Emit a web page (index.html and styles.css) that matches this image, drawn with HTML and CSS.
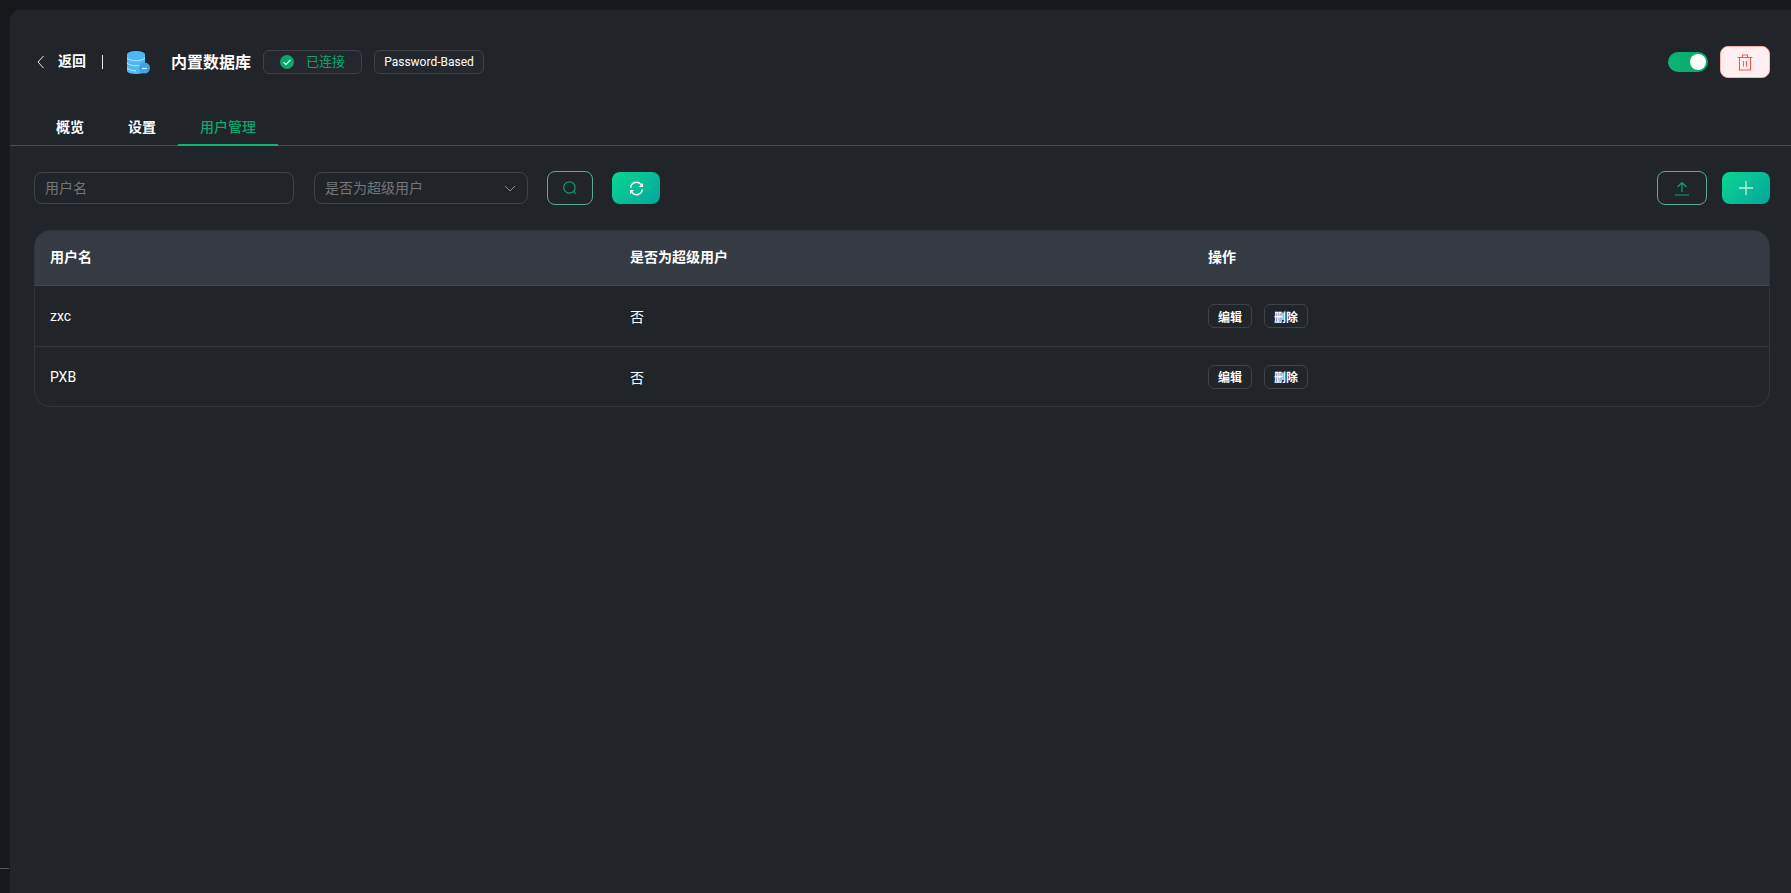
FILE: index.html
```html
<!DOCTYPE html>
<html lang="zh">
<head>
<meta charset="utf-8">
<title>内置数据库</title>
<link rel="stylesheet" href="styles.css">
</head>
<body>
<div class="shell">
  <aside class="rail"><div class="rail-line"></div></aside>
  <main class="panel">
    <header class="head">
      <div class="head-left">
        <svg class="back-icon" viewBox="0 0 8 14" width="8" height="14"><path d="M6.5 1 1 7l5.5 6" fill="none" stroke="#e8e8e8" stroke-width="1"/></svg>
        <span class="back-text">返回</span>
        <span class="vline"></span>
        <svg class="db-icon" viewBox="0 0 24 23" width="24" height="23">
          <path d="M1 3.5C1 1.4 5.5 0 10 0s9 1.400 9 3.500V20c0 1.700-4.500 3-9 3s-9-1.300-9-3z" fill="#4db8f8"/>
          <path d="M1 7c2 2 6 2.800 9 2.800S17 9 19 7M1 12c2 2 6 2.800 9 2.800S17 14 19 12M1 17c2 2 6 2.800 9 2.800" fill="none" stroke="#c4e8ff" stroke-width="1"/>
          <circle cx="18.500" cy="17" r="5.500" fill="#3aa4e6"/>
          <path d="M16 17.500h5" stroke="#dff3ff" stroke-width="1.200"/>
        </svg>
        <span class="title">内置数据库</span>
        <span class="tag tag-status">
          <svg viewBox="0 0 14 14" width="14" height="14"><circle cx="7" cy="7" r="7" fill="#0aa76d"/><path d="M3.600 7.300 6 9.500l4.400-4.600" fill="none" stroke="#fff" stroke-width="1.100"/></svg>
          <span class="status-text">已连接</span>
        </span>
        <span class="tag tag-auth">Password-Based</span>
      </div>
      <div class="head-right">
        <span class="switch"><span class="knob"></span></span>
        <button class="btn-del" type="button">
          <svg viewBox="0 0 16 17" width="16" height="17"><path d="M.5 3.500h15M5.500 3.500V1h5v2.500M2.500 3.500V16h11V3.500M6.500 7v5.500M9.500 7v5.500" fill="none" stroke="#f5594e" stroke-width="1.100"/></svg>
        </button>
      </div>
    </header>
    <nav class="tabs">
      <a class="tab">概览</a>
      <a class="tab">设置</a>
      <a class="tab tab-active">用户管理</a>
    </nav>
    <section class="content">
      <div class="filters">
        <div class="field field-name"><span class="ph">用户名</span></div>
        <div class="field field-select">
          <span class="ph">是否为超级用户</span>
          <svg viewBox="0 0 12 7" width="12" height="7"><path d="M1 1l5 5 5-5" fill="none" stroke="#8a8d92" stroke-width="1"/></svg>
        </div>
        <button class="btn btn-outline btn-search" type="button">
          <svg viewBox="0 0 14 14" width="16" height="16"><circle cx="6.500" cy="6.500" r="5" fill="none" stroke="#0aa76d" stroke-width="1"/><path d="M10.200 10.200 12 12" stroke="#0aa76d" stroke-width="1"/></svg>
        </button>
        <button class="btn btn-fill btn-refresh" type="button">
          <svg viewBox="0 0 16 16" width="15" height="15"><path d="M1.800 7A6.300 6.300 0 0 1 13 3.800M14.200 9A6.300 6.300 0 0 1 3 12.200" fill="none" stroke="#fff" stroke-width="1.500"/><path d="M15 2v4.500h-4.500zM1 14V9.500h4.500z" fill="#fff"/></svg>
        </button>
        <div class="spacer"></div>
        <button class="btn btn-outline btn-upload" type="button">
          <svg viewBox="0 0 14 15" width="14" height="15"><path d="M7 11V1.500M2.500 6 7 1.500 11.500 6M0 14h14" fill="none" stroke="#0aa76d" stroke-width="1.200"/></svg>
        </button>
        <button class="btn btn-fill btn-add" type="button">
          <svg viewBox="0 0 14 14" width="14" height="14"><path d="M7 0v14M0 7h14" stroke="#c4f0e2" stroke-width="1.300"/></svg>
        </button>
      </div>
      <div class="table">
        <div class="row row-head">
          <div>用户名</div><div>是否为超级用户</div><div>操作</div>
        </div>
        <div class="row">
          <div>zxc</div><div>否</div>
          <div class="ops"><button class="op" type="button">编辑</button><button class="op" type="button">删除</button></div>
        </div>
        <div class="row row-last">
          <div>PXB</div><div>否</div>
          <div class="ops"><button class="op" type="button">编辑</button><button class="op" type="button">删除</button></div>
        </div>
      </div>
    </section>
  </main>
</div>
</body>
</html>
```
FILE: styles.css
```css
* { box-sizing: border-box; }
html, body { margin: 0; height: 100%; overflow: hidden; }
body {
  background: #17181c;
  color: #fff;
  font-family: Roboto, "Noto Sans CJK SC", sans-serif;
  font-size: 14px;
}
button { font-family: inherit; cursor: pointer; padding: 0; }
.shell { display: flex; height: 893px; padding-top: 10px; }
.rail { width: 10px; flex: none; display: flex; flex-direction: column; justify-content: flex-end; padding-bottom: 24px; }
.rail-line { height: 1px; background: #55575b; width: 9px; }
.panel { flex: 1; min-width: 0; height: 900px; background: #212429; border-radius: 10px 0 0 10px; }

.head { height: 86px; padding: 36px 21px 0 27px; display: flex; justify-content: space-between; align-items: flex-start; }
.head-left { display: flex; align-items: center; height: 32px; }
.back-icon { margin-right: 13px; }
.back-text { font-weight: 700; line-height: 20px; width: 28px; padding-bottom: 2px; height: 22px; }
.vline { width: 1px; height: 14px; background: #e8e8e8; margin: 0 23px 0 16px; }
.db-icon { margin-right: 21px; }
.title { font-size: 16px; font-weight: 700; width: 80px; margin-right: 12px; padding-bottom: 3px; }
.tag { height: 24px; border: 1px solid #3f4247; border-radius: 6px; display: flex; align-items: center; background: #24272d; font-size: 12px; }
.tag-status { width: 99px; padding-left: 16px; gap: 12px; color: #0aa76d; font-size: 13px; margin-right: 12px; }
.status-text { padding-bottom: 3px; }
.tag-auth { width: 110px; justify-content: center; }
.head-right { display: flex; align-items: center; height: 32px; margin-top: 0; }
.switch { width: 40px; height: 20px; border-radius: 10px; background: linear-gradient(90deg, #0ab574, #0aa76d); display: flex; align-items: center; justify-content: flex-end; padding-right: 2px; margin-right: 12px; }
.knob { width: 16px; height: 16px; border-radius: 50%; background: #fff; }
.btn-del { width: 50px; height: 32px; border-radius: 8px; background: #ffeff0; border: 1px solid #ffb3ae; display: flex; align-items: center; justify-content: center; }

.tabs { display: flex; height: 50px; border-bottom: 1px solid #4a4c50; padding-left: 24px; }
.tab { width: 72px; height: 50px; display: flex; align-items: center; justify-content: center; font-weight: 700; padding-top: 10px; }
.tab-active { width: 100px; color: #0aa76d; font-weight: 500; border-bottom: 2px solid #0ab574; padding-top: 12px; }

.content { padding: 25px 21px 0 24px; }
.filters { display: flex; align-items: center; height: 34px; }
.field { height: 32px; border: 1px solid #3f4247; border-radius: 8px; color: #73767b; display: flex; align-items: center; padding-left: 10px; }
.ph { padding-bottom: 3px; }
.field-name { width: 260px; margin-right: 20px; }
.field-select { width: 214px; margin-right: 19px; justify-content: space-between; padding-right: 11px; }
.btn { display: flex; align-items: center; justify-content: center; border-radius: 8px; }
.btn-outline { background: transparent; border: 1px solid #5aa896; height: 34px; width: 46px; }
.btn-upload { width: 50px; margin-right: 15px; }
.btn-search { margin-right: 19px; }
.btn-fill { border: 0; height: 32px; width: 48px; background: linear-gradient(135deg, #0bd68f, #05a59e); }
.spacer { flex: 1; }

.table { margin-top: 25px; border: 1px solid #32353b; border-radius: 16px; overflow: hidden; }
.row { display: grid; grid-template-columns: 580px 578px 1fr; height: 61px; align-items: center; padding-left: 15px; border-bottom: 1px solid #32353b; }
.row-head { height: 55px; background: #363a43; font-weight: 700; border-bottom: 1px solid #45484e; padding-bottom: 4px; }
.row-last { height: 59px; border-bottom: 0; }
.ops { display: flex; gap: 12px; }
.op { width: 44px; height: 24px; border: 1px solid #3f4247; border-radius: 6px; background: transparent; color: #fff; font-size: 12px; font-weight: 700; display: flex; align-items: center; justify-content: center; }
```
